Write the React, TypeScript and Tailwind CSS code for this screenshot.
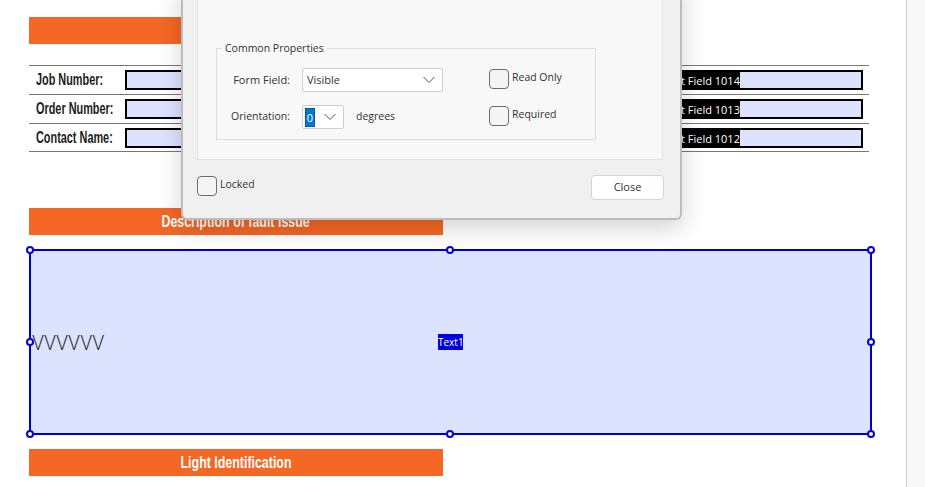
const rows = [
  { label: "Job Number:", field: "Text Field 1014" },
  { label: "Order Number:", field: "Text Field 1013" },
  { label: "Contact Name:", field: "Text Field 1012" },
];

const handles = [
  "left-[-5px] top-[-5px]",
  "left-[415px] top-[-5px]",
  "right-[-5px] top-[-5px]",
  "left-[-5px] top-[87px]",
  "right-[-5px] top-[87px]",
  "left-[-5px] bottom-[-5px]",
  "left-[415px] bottom-[-5px]",
  "right-[-5px] bottom-[-5px]",
];

const Chevron = () => (
  <svg width="12" height="8" viewBox="0 0 12 8" fill="none" className="shrink-0">
    <path d="M.5 1l5.5 5.5L11.5 1" stroke="#555" strokeWidth="1" />
  </svg>
);

const Heading = ({ text }: { text?: string }) => (
  <div className="w-[414px] h-[27px] pt-[1px] bg-[#f46725] flex items-center justify-center text-white font-bold text-[17px]">
    <span className="inline-block whitespace-nowrap scale-x-[0.73]">{text}</span>
  </div>
);

const Check = ({ label }: { label: string }) => (
  <div className="flex items-start gap-[3px]">
    <div className="w-[20px] h-[20px] rounded-[4px] border border-[#6e6e6e] bg-[#f4f4f4]" />
    <span className="text-[10.5px] leading-[16px] text-[#333]">{label}</span>
  </div>
);

const Dialog = () => (
  <div className="absolute left-[181px] top-[-20px] w-[501px] h-[240px] bg-[#f0f0f0] border-l-2 border-r-2 border-b-2 border-[#bdbdbd] rounded-br-[6px] rounded-bl-[6px] shadow-[0_8px_24px_rgba(0,0,0,0.18)] px-[14px] flex flex-col font-['Open_Sans',sans-serif] z-10">
    <div className="w-[466px] h-[180px] shrink-0 bg-[#f8f8f8] border-r border-b border-l border-[#e2e2e2] px-[18px] pt-[61px]">
      <fieldset className="w-[380px] h-[99px] border border-[#dedede] pl-[14px]">
        <legend className="ml-[-9px] px-[3px] text-[10.5px] leading-[15px] text-[#333]">Common Properties</legend>
        <div className="flex">
          <div className="w-[258px] flex flex-col gap-[13px] pt-[12px]">
            <div className="flex items-center">
              <span className="w-[59px] text-right text-[11px] whitespace-nowrap text-[#333]">Form Field:</span>
              <div className="ml-[12px] w-[141px] h-[24px] bg-white border border-[#cfcfcf] rounded-[2px] flex items-center justify-between pl-[4px] pr-[7px] text-[11px] text-[#333]">
                Visible
                <Chevron />
              </div>
            </div>
            <div className="flex items-center">
              <span className="w-[59px] text-right text-[10.5px] whitespace-nowrap text-[#333]">Orientation:</span>
              <div className="ml-[12px] w-[42px] h-[24px] bg-white border border-[#cfcfcf] rounded-[2px] flex items-center justify-between pl-[2px] pr-[7px]">
                <span className="w-[10px] h-[19px] bg-[#0078d4] border border-dotted border-[#0b3a66] text-white text-[11px] leading-[17px] text-center">0</span>
                <Chevron />
              </div>
              <span className="ml-[12px] text-[10.5px] text-[#333]">degrees</span>
            </div>
          </div>
          <div className="flex flex-col gap-[17px] pt-[13px]">
            <Check label="Read Only" />
            <Check label="Required" />
          </div>
        </div>
      </fieldset>
    </div>
    <div className="flex justify-between items-start pt-[16px]">
      <Check label="Locked" />
      <button className="w-[73px] h-[25px] mr-[2px] mt-[-1px] bg-white border border-[#d4d4d4] rounded-[4px] text-[11px] text-[#333]">Close</button>
    </div>
  </div>
);

const App = () => {
  return (
    <div className="w-[925px] h-[487px] flex overflow-hidden bg-white font-['Liberation_Sans',sans-serif]">
      <div className="relative flex-1 pl-[29px] pt-[17px]">
        <Heading />
        <div className="w-[840px] mt-[21px] border-b border-[#777]">
          {rows.map((row, i) => (
            <div key={row.label} className={`${i === 2 ? "h-[28px]" : "h-[29px]"} border-t border-[#777] flex items-center`}>
              <div className="w-[96px] shrink-0 pl-[7px] font-bold text-[16px] text-[#1c1c1c] whitespace-nowrap">
                <span className="inline-block origin-left scale-x-[0.68]">{row.label}</span>
              </div>
              <div className="w-[300px] h-[20px] shrink-0 border-2 border-black bg-[#dde3ff]" />
              <div className="ml-[236px] w-[202px] h-[20px] shrink-0 border-2 border-black bg-[#dde3ff] flex">
                <span className="bg-black text-white text-[11px] leading-[17px] font-['Open_Sans',sans-serif] whitespace-nowrap">{row.field}</span>
              </div>
            </div>
          ))}
        </div>
        <div className="mt-[56px]">
          <Heading text="Description of fault issue" />
        </div>
        <div className="relative mt-[14px] w-[843px] h-[186px] pt-[3px] border-2 border-[#0000c8] bg-[#dce3fe] flex items-center">
          <span className="pl-[1px] text-[19.5px] font-['Roboto',sans-serif] font-light text-[#333]">VVVVVV</span>
          <span className="absolute left-[407px] top-[83px] w-[25px] h-[16px] bg-[#0000e0] text-white text-[10px] leading-[16px] text-center whitespace-nowrap font-['Open_Sans',sans-serif]">Text1</span>
          {handles.map((pos) => (
            <span key={pos} className={`absolute ${pos} w-[8px] h-[8px] rounded-full bg-white border-2 border-[#0000e0]`} />
          ))}
        </div>
        <div className="mt-[14px]">
          <Heading text="Light Identification" />
        </div>
        <Dialog />
      </div>
      <div className="w-[19px] h-full bg-[#f8f8f8] border-l border-[#cfcfcf]" />
    </div>
  );
};

export default App;
